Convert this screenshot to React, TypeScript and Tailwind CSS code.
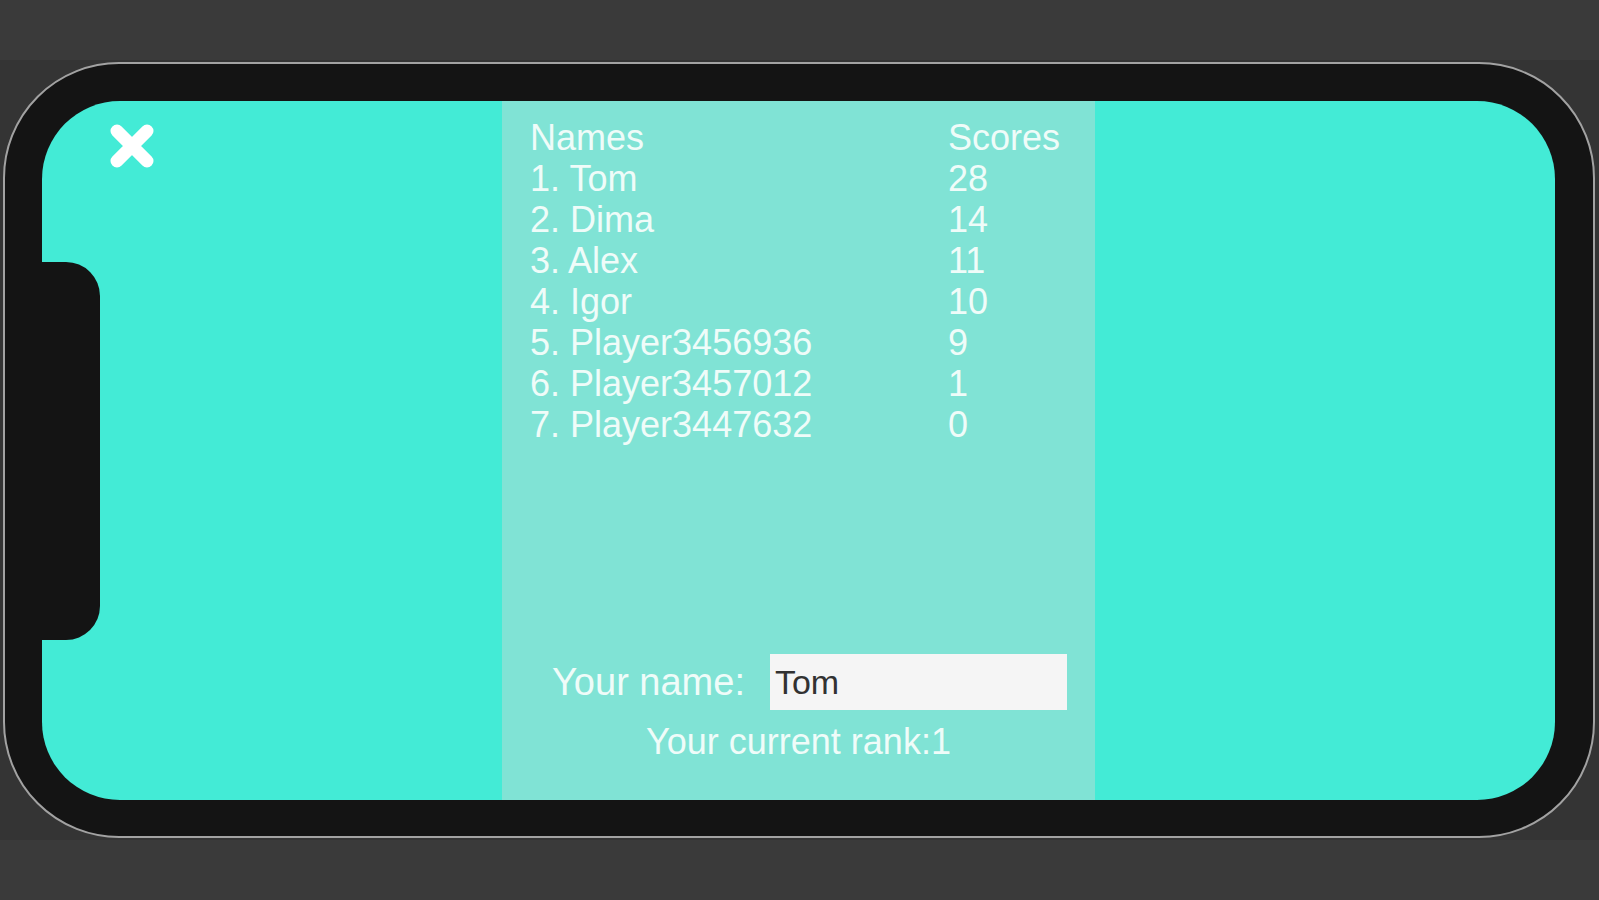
import React from 'react';

const rows = [
  { name: 'Tom', score: 28 },
  { name: 'Dima', score: 14 },
  { name: 'Alex', score: 11 },
  { name: 'Igor', score: 10 },
  { name: 'Player3456936', score: 9 },
  { name: 'Player3457012', score: 1 },
  { name: 'Player3447632', score: 0 },
];

const CloseIcon = () => (
  <svg width="46" height="46" viewBox="0 0 46 46" fill="none">
    <path d="M8 8 L38 38 M38 8 L8 38" stroke="#ffffff" strokeWidth="13" strokeLinecap="round" />
  </svg>
);

export default function App() {
  return (
    <div
      className="w-[1599px] h-[900px] flex flex-col bg-[#3a3a3a] overflow-hidden"
      style={{ fontFamily: '"Liberation Sans", Arial, sans-serif' }}
    >
      {/* top bar */}
      <div className="h-[60px] shrink-0 bg-[#3a3a3a]" />

      {/* simulator area */}
      <div className="h-[780px] shrink-0 bg-[#343434] flex pl-[3px] pr-[4px] py-[2px]">
        {/* device */}
        <div className="flex-1 flex rounded-[116px] border-2 border-[#a2a2a2] bg-[#141414] pl-[37px] pr-[38px] pt-[37px] pb-[36px]">
          {/* screen */}
          <div className="relative flex-1 flex justify-center rounded-[78px] bg-[#43ebd6] overflow-hidden">
            {/* notch */}
            <div className="absolute left-0 top-[161px] h-[378px] w-[58px] rounded-r-[34px] bg-[#141414]" />

            {/* close button */}
            <button className="absolute left-[67px] top-[22px] w-[46px] h-[46px] flex items-center justify-center">
              <CloseIcon />
            </button>

            {/* leaderboard panel */}
            <div className="w-[593px] flex flex-col bg-[#80e3d5] pt-[16px] pb-[38px] text-[36px] leading-[41px] text-[#effcf9]">
              <div className="grid grid-cols-[418px_1fr] pl-[28px]">
                <div>Names</div>
                <div>Scores</div>
                {rows.map((row, i) => (
                  <React.Fragment key={row.name}>
                    <div>
                      {i + 1}. {row.name}
                    </div>
                    <div>{row.score}</div>
                  </React.Fragment>
                ))}
              </div>

              <div className="flex-1" />

              <div className="flex items-center pl-[50px] h-[56px]">
                <span className="text-[38px]">Your name:</span>
                <input
                  readOnly
                  value="Tom"
                  className="ml-[25px] w-[297px] h-[56px] bg-[#f5f5f5] pl-[5px] text-[34px] text-[#323232] outline-none"
                />
              </div>

              <div className="mt-[11px] text-center">Your current rank:1</div>
            </div>
          </div>
        </div>
      </div>

      {/* bottom bar */}
      <div className="h-[60px] shrink-0 bg-[#3a3a3a]" />
    </div>
  );
}
